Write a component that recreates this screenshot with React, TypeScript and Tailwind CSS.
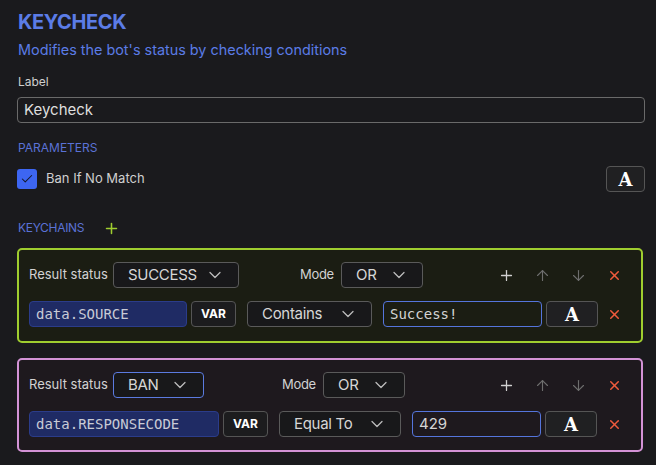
import { ArrowDown, ArrowUp, Check, ChevronDown, Plus, X } from 'lucide-react';
import React from 'react';

interface Condition {
  variable: string;
  varWidth: string;
  comparer: string;
  comparerWidth: string;
  value: string;
  valueWidth: string;
  mono: boolean;
}

interface Keychain {
  status: string;
  statusWidth: string;
  statusFocused: boolean;
  modeGap: string;
  theme: 'success' | 'ban';
  condition: Condition;
}

const keychains: Keychain[] = [
  {
    status: 'SUCCESS',
    statusWidth: 'w-[126px]',
    statusFocused: false,
    modeGap: 'ml-[61px]',
    theme: 'success',
    condition: {
      variable: 'data.SOURCE',
      varWidth: 'w-[158px]',
      comparer: 'Contains',
      comparerWidth: 'w-[125px]',
      value: 'Success!',
      valueWidth: 'w-[159px]',
      mono: true,
    },
  },
  {
    status: 'BAN',
    statusWidth: 'w-[91px]',
    statusFocused: true,
    modeGap: 'ml-[78px]',
    theme: 'ban',
    condition: {
      variable: 'data.RESPONSECODE',
      varWidth: 'w-[190px]',
      comparer: 'Equal To',
      comparerWidth: 'w-[122px]',
      value: '429',
      valueWidth: 'w-[129px]',
      mono: false,
    },
  },
];

function Select({ value, width, focused }: { value: string; width: string; focused?: boolean }) {
  return (
    <div
      className={`${width} h-[26px] flex items-center justify-between pl-[14px] pr-[13px] rounded-[4px] border bg-[#18181a] text-[15px] tracking-[-0.3px] text-[#d6d6d6] ${
        focused ? 'border-[#5b7be0]' : 'border-[#5a5a5a]'
      }`}
    >
      <span>{value}</span>
      <ChevronDown size={20} strokeWidth={1.5} className="text-[#bdbdbd]" />
    </div>
  );
}

function TypeButton({ width = 'w-[52px]' }: { width?: string }) {
  return (
    <button
      className={`${width} h-[26px] flex items-center justify-center rounded-[4px] border border-[#555] bg-[#202022] text-white text-[18px] font-bold font-['DejaVu_Serif',serif]`}
    >
      A
    </button>
  );
}

function KeychainCard({ chain }: { chain: Keychain }) {
  const c = chain.condition;
  const box =
    chain.theme === 'success'
      ? 'border-[#9fcd2f] bg-[#1b1d13] h-[95px] mt-[11px]'
      : 'border-[#d393d6] bg-[#1e191e] h-[94px] mt-[15px]';

  return (
    <div className={`${box} border-2 rounded-[5px] pt-[12px] pl-[10px]`}>
      {/* Status / mode row */}
      <div className="flex items-center h-[26px]">
        <span className="text-[13px] text-[#d2d2d2] w-[84px]">Result status</span>
        <Select value={chain.status} width={chain.statusWidth} focused={chain.statusFocused} />
        <span className={`${chain.modeGap} w-[33px] whitespace-nowrap text-[13px] tracking-[-0.3px] text-[#d2d2d2] mr-[8px]`}>
          Mode
        </span>
        <Select value="OR" width="w-[82px]" />
        <div className="ml-auto flex items-center gap-[17px] pr-[17px]">
          <Plus size={17} strokeWidth={1.8} className="text-[#d0d0d0] mx-[1px]" />
          <ArrowUp size={17} strokeWidth={1.6} className="text-[#6e6e6e] mx-[1px]" />
          <ArrowDown size={17} strokeWidth={1.6} className="text-[#6e6e6e] mx-[1px]" />
          <X size={15} strokeWidth={2.4} className="text-[#f05a3c] mx-[2px]" />
        </div>
      </div>

      {/* Condition row */}
      <div className="flex items-center h-[26px] mt-[13px]">
        <div
          className={`${c.varWidth} h-[26px] flex items-center px-[6px] rounded-[4px] border border-[#2b3c8a] bg-[#1f2b64] text-[14px] text-[#c8cad6] font-['DejaVu_Sans_Mono',monospace]`}
        >
          {c.variable}
        </div>
        <button className="ml-[4px] w-[45px] h-[26px] flex items-center justify-center rounded-[4px] border border-[#555] bg-[#1c1c1e] text-[12px] font-bold text-white">
          VAR
        </button>
        <div className="ml-[11px]">
          <Select value={c.comparer} width={c.comparerWidth} />
        </div>
        <div
          className={`ml-[11px] ${c.valueWidth} h-[26px] flex items-center px-[6px] rounded-[4px] border border-[#5575dc] text-[#d4d4d4] ${
            c.mono ? "text-[14px] font-['DejaVu_Sans_Mono',monospace]" : 'text-[15px]'
          }`}
        >
          {c.value}
        </div>
        <div className="ml-[4px]">
          <TypeButton />
        </div>
        <div className="ml-auto pr-[17px]">
          <X size={15} strokeWidth={2.4} className="text-[#f05a3c] mx-[2px]" />
        </div>
      </div>
    </div>
  );
}

export default function App() {
  return (
    <div className="w-[656px] h-[465px] overflow-hidden bg-[#1a1a1d] pl-[17px] pr-[11px] font-['Inter',sans-serif]">
      <div className="h-[41px] pt-[2px] flex items-center pl-[1px] text-[20px] font-bold text-[#5b7ce6] tracking-[-0.4px]">
        KEYCHECK
      </div>
      <div className="h-[18px] leading-[18px] pl-[1px] text-[14.4px] text-[#5b7ce6]">
        Modifies the bot's status by checking conditions
      </div>

      <div className="mt-[14px] h-[18px] leading-[18px] pl-[1px] text-[12px] text-[#cfcfcf]">Label</div>
      <div className="mt-[6px] h-[26px] flex items-center px-[6px] rounded-[4px] border border-[#6a6a6a] text-[15px] text-[#dedede]">
        Keycheck
      </div>

      <div className="mt-[16px] h-[18px] leading-[18px] pl-[1px] text-[12px] text-[#5a72d6]">PARAMETERS</div>
      <div className="mt-[9px] h-[26px] flex items-center">
        <div className="w-[20px] h-[20px] rounded-[3px] bg-[#3d66f2] flex items-center justify-center">
          <Check size={14} strokeWidth={1.8} className="text-[#15182a]" />
        </div>
        <span className="ml-[9px] text-[13px] text-[#cfcfcf]">Ban If No Match</span>
        <div className="ml-auto">
          <TypeButton width="w-[39px]" />
        </div>
      </div>

      <div className="mt-[27px] h-[18px] flex items-center">
        <span className="pl-[1px] text-[12px] text-[#5a72d6] tracking-[-0.3px]">KEYCHAINS</span>
        <Plus size={17} strokeWidth={2.2} className="ml-[19px] text-[#9fcd2f]" />
      </div>

      <div className="mr-[2px]">
        {keychains.map((chain) => (
          <KeychainCard key={chain.status} chain={chain} />
        ))}
      </div>
    </div>
  );
}
